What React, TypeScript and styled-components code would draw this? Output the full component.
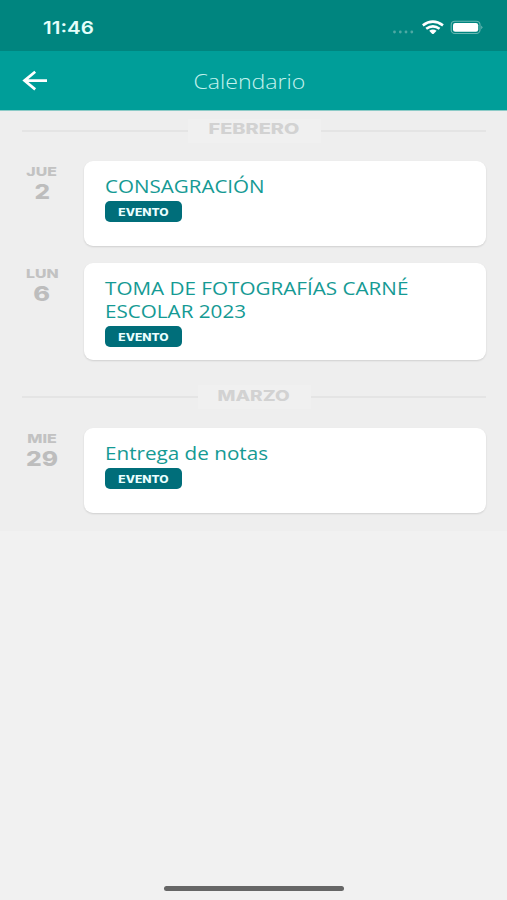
import React from 'react';
import styled, { createGlobalStyle } from 'styled-components';

const GlobalStyle = createGlobalStyle`
  * { box-sizing: border-box; }
  body { margin: 0; background: #f1f1f1; font-family: 'Open Sans', sans-serif; }
`;

const Screen = styled.div`
  display: flex;
  flex-direction: column;
  height: 900px;
  overflow: hidden;
  background: #f1f1f1;
`;

const StatusBar = styled.header`
  display: flex;
  align-items: center;
  justify-content: space-between;
  height: 51px;
  padding: 4px 24px 0 43px;
  background: #00857f;
`;

/* Wide lettering: glyphs are widened from the given side. */
const Wide = styled.span<{ $x: number; $from?: string; $drop?: number }>`
  display: inline-block;
  white-space: nowrap;
  transform: translateY(${(p) => p.$drop ?? 0}px) scaleX(${(p) => p.$x});
  transform-origin: ${(p) => p.$from ?? 'left'} center;
`;

const Clock = styled(Wide)`
  font: 600 17px/20px Inter, sans-serif;
  color: #e4fffb;
`;

const StatusIcons = styled.svg`
  display: block;
  width: 92px;
  height: 18px;
`;

const NavBar = styled.nav`
  display: grid;
  grid-template-columns: 60px 1fr 60px;
  align-items: center;
  height: 60px;
  background: #009e99;
  border-bottom: 1px solid #8ccbc7;
`;

const BackButton = styled.button`
  display: flex;
  padding: 0 0 0 22px;
  border: 0;
  background: none;
`;

const ScreenTitle = styled.h1`
  margin: 0 0 0 -9px;
  text-align: center;
  font: 300 20px/28px 'Open Sans', sans-serif;
  color: #c5f2ee;
`;

const Agenda = styled.main`
  height: 420px;
  padding: 8px 21px 0 22px;
  background: #eeeeee;
`;

const MonthHeader = styled.h2`
  display: flex;
  align-items: center;
  height: 24px;
  margin: 0;
  font: 800 14px/20px Inter, sans-serif;
  color: #d2d2d2;
`;

const Rule = styled.span`
  flex: 1;
  height: 2px;
  background: #e4e4e4;
`;

const MonthLabel = styled.span<{ $width: number }>`
  width: ${(p) => p.$width}px;
  height: 24px;
  text-align: center;
  background: #f0f0f0;
`;

const EventRow = styled.section<{ $gap: number }>`
  display: grid;
  grid-template-columns: 40px 402px;
  column-gap: 22px;
  margin-top: ${(p) => p.$gap}px;
`;

const DateBox = styled.div`
  display: flex;
  flex-direction: column;
  align-items: center;
  padding-top: 3px;
  color: #c2c2c2;
`;

const Weekday = styled(Wide)`
  font: 800 12px/15px Inter, sans-serif;
`;

const DayNumber = styled(Wide)`
  font: 800 20px/26px Inter, sans-serif;
  color: #bdbdbd;
`;

const Card = styled.article<{ $height: number }>`
  height: ${(p) => p.$height}px;
  padding: 13px 21px 0;
  border-radius: 9px;
  background: #ffffff;
  box-shadow: 0 1px 2px rgba(0, 0, 0, 0.13);
`;

const EventTitle = styled.h3`
  margin: 0;
  font: 400 17.4px/23px 'Open Sans', sans-serif;
  color: #159a94;
`;

const TitleLine = styled(Wide)`
  display: block;
  width: max-content;
`;

const Tag = styled.span`
  display: flex;
  align-items: center;
  justify-content: center;
  width: 77px;
  height: 21px;
  margin-top: 4px;
  border-radius: 5px;
  background: #006e7a;
  font: 800 9.8px/21px Inter, sans-serif;
  color: #eaffff;
`;

const HomeIndicator = styled.div`
  width: 180px;
  height: 5px;
  margin: auto auto 9px 164px;
  border-radius: 3px;
  background: #666666;
`;

type Line = { text: string; x: number };
type EventItem = { weekday: string; wx: number; day: string; dx: number; lines: Line[]; height: number; gap: number };
type Month = { name: string; x: number; width: number; gap: number; events: EventItem[] };

const months: Month[] = [
  {
    name: 'FEBRERO', x: 1.42, width: 133, gap: 0,
    events: [
      { weekday: 'JUE', wx: 1.32, day: '2', dx: 1.22, height: 85, gap: 18, lines: [{ text: 'CONSAGRACIÓN', x: 1.183 }] },
      {
        weekday: 'LUN', wx: 1.32, day: '6', dx: 1.27, height: 97, gap: 17,
        lines: [{ text: 'TOMA DE FOTOGRAFÍAS CARNÉ', x: 1.188 }, { text: 'ESCOLAR 2023', x: 1.187 }],
      },
    ],
  },
  {
    name: 'MARZO', x: 1.36, width: 113, gap: 25,
    events: [
      { weekday: 'MIE', wx: 1.34, day: '29', dx: 1.23, height: 85, gap: 19, lines: [{ text: 'Entrega de notas', x: 1.188 }] },
    ],
  },
];

const MonthBlock = styled.div<{ $gap: number }>`
  padding-top: ${(p) => p.$gap}px;
`;

export default function App() {
  return (
    <>
      <GlobalStyle />
      <Screen>
        <StatusBar>
          <Clock $x={1.21}>11:46</Clock>
          <StatusIcons viewBox="0 0 92 18">
            <g fill="#4fa9a4">
              <circle cx="3.5" cy="13" r="1.4" />
              <circle cx="9.3" cy="13" r="1.4" />
              <circle cx="15" cy="13" r="1.4" />
              <circle cx="20.8" cy="13" r="1.4" />
            </g>
            <g fill="none" stroke="#fff" strokeWidth="2.6">
              <path d="M31.8 6.4Q41.9 -1 52 6.4" />
              <path d="M35.2 9.8Q41.9 4.9 48.6 9.8" />
            </g>
            <path d="M38.2 11.8Q41.9 9 45.6 11.8L43 14.5Q41.9 15.6 40.8 14.5Z" fill="#fff" />
            <rect x="60.2" y="2.2" width="28.8" height="12.3" rx="3.6" fill="none" stroke="#68b7b2" strokeWidth="1.1" />
            <rect x="62" y="4" width="25.2" height="8.8" rx="2.2" fill="#fff" />
            <path d="M90.2 6.4Q92.6 8.3 90.2 10.2Z" fill="#68b7b2" />
          </StatusIcons>
        </StatusBar>
        <NavBar>
          <BackButton aria-label="Volver">
            <svg width="26" height="22" viewBox="0 0 26 22" fill="none" stroke="#fff" strokeWidth="2.7">
              <path d="M25 10.6H2.5M13.2 1.8L2.5 10.6L13.2 19.4" />
            </svg>
          </BackButton>
          <ScreenTitle><Wide $x={1.155} $from="center" $drop={0.6}>Calendario</Wide></ScreenTitle>
        </NavBar>
        <Agenda>
          {months.map((m, i) => (
            <MonthBlock key={m.name} $gap={m.gap}>
              <MonthHeader>
                <Rule />
                <MonthLabel $width={m.width}><Wide $x={m.x} $from="center" $drop={i * 0.8}>{m.name}</Wide></MonthLabel>
                <Rule />
              </MonthHeader>
              {m.events.map((e) => (
                <EventRow key={e.day} $gap={e.gap}>
                  <DateBox>
                    <Weekday $x={e.wx} $from="center">{e.weekday}</Weekday>
                    <DayNumber $x={e.dx} $from="center" $drop={0.4}>{e.day}</DayNumber>
                  </DateBox>
                  <Card $height={e.height}>
                    <EventTitle>
                      {e.lines.map((l) => <TitleLine key={l.text} $x={l.x} $drop={0.5}>{l.text}</TitleLine>)}
                    </EventTitle>
                    <Tag><Wide $x={1.23} $from="center" $drop={0.7}>EVENTO</Wide></Tag>
                  </Card>
                </EventRow>
              ))}
            </MonthBlock>
          ))}
        </Agenda>
        <HomeIndicator />
      </Screen>
    </>
  );
}
